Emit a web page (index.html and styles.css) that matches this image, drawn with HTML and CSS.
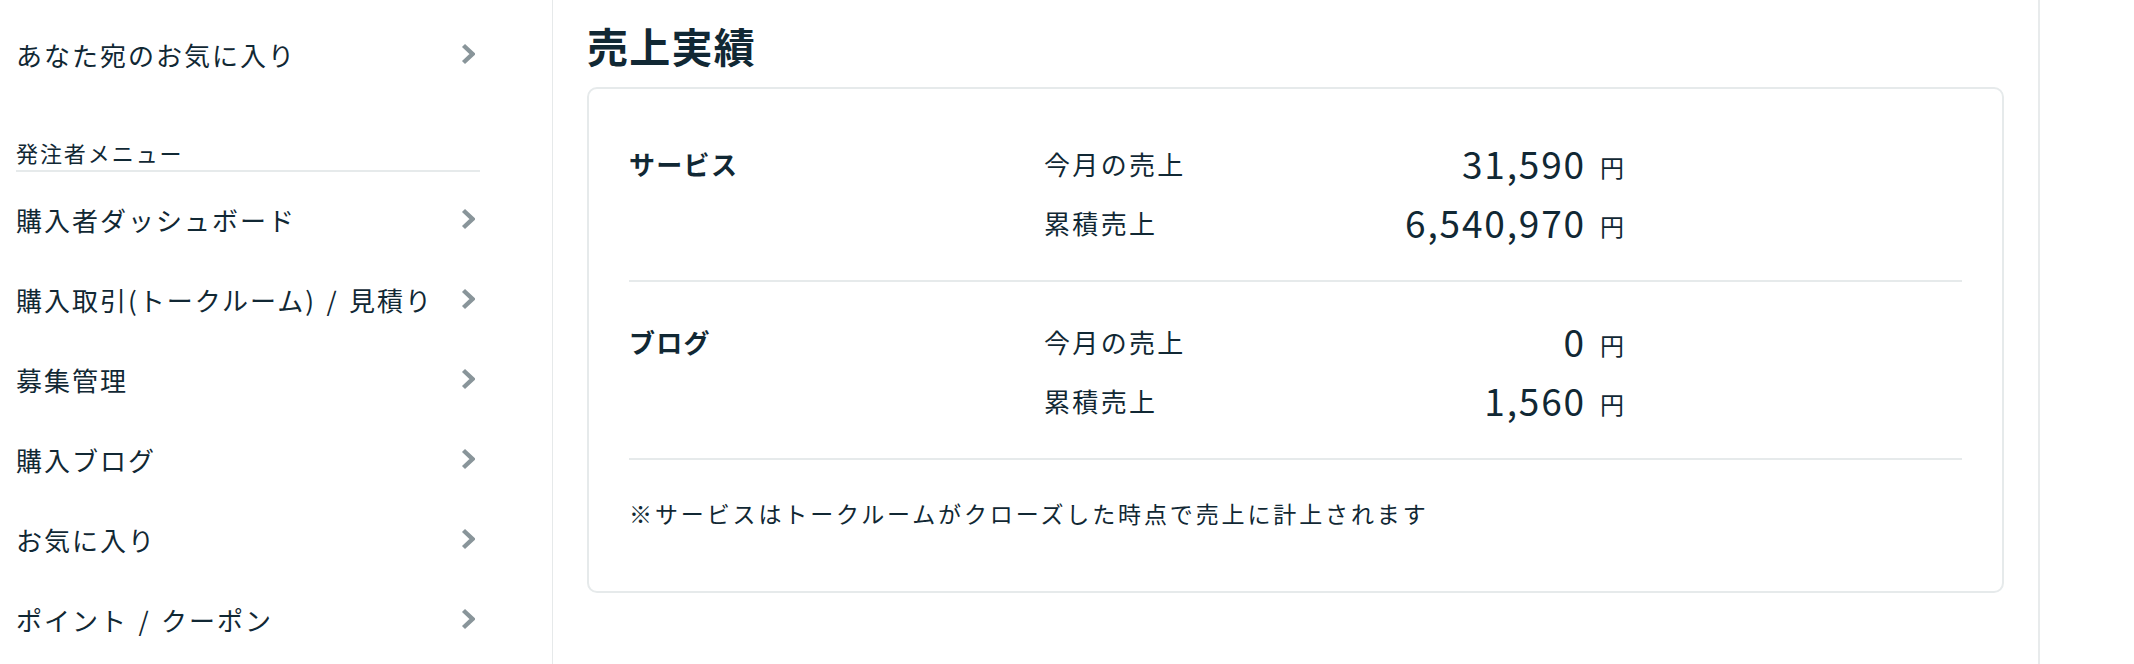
FILE: index.html
```html
<!DOCTYPE html>
<html lang="ja">
<head>
<meta charset="utf-8">
<title>売上実績</title>
<link rel="stylesheet" href="styles.css">
</head>
<body>
<div class="layout">
  <aside class="sidebar">
    <a class="nav-item" href="#"><span>あなた宛のお気に入り</span><svg class="chev" viewBox="0 0 14 22"><polyline points="2.5,2.5 11.5,11 2.5,19.5"/></svg></a>
    <div class="nav-heading">発注者メニュー</div>
    <a class="nav-item" href="#"><span>購入者ダッシュボード</span><svg class="chev" viewBox="0 0 14 22"><polyline points="2.5,2.5 11.5,11 2.5,19.5"/></svg></a>
    <a class="nav-item" href="#"><span>購入取引(トークルーム) / 見積り</span><svg class="chev" viewBox="0 0 14 22"><polyline points="2.5,2.5 11.5,11 2.5,19.5"/></svg></a>
    <a class="nav-item" href="#"><span>募集管理</span><svg class="chev" viewBox="0 0 14 22"><polyline points="2.5,2.5 11.5,11 2.5,19.5"/></svg></a>
    <a class="nav-item" href="#"><span>購入ブログ</span><svg class="chev" viewBox="0 0 14 22"><polyline points="2.5,2.5 11.5,11 2.5,19.5"/></svg></a>
    <a class="nav-item" href="#"><span>お気に入り</span><svg class="chev" viewBox="0 0 14 22"><polyline points="2.5,2.5 11.5,11 2.5,19.5"/></svg></a>
    <a class="nav-item" href="#"><span>ポイント / クーポン</span><svg class="chev" viewBox="0 0 14 22"><polyline points="2.5,2.5 11.5,11 2.5,19.5"/></svg></a>
  </aside>
  <main class="main">
    <h1 class="page-title">売上実績</h1>
    <div class="card">
      <section class="sales-section">
        <div class="sales-name">サービス</div>
        <div class="sales-rows">
          <div class="sales-row"><span class="sales-label">今月の売上</span><span class="sales-value">31,590</span><span class="sales-unit">円</span></div>
          <div class="sales-row"><span class="sales-label">累積売上</span><span class="sales-value">6,540,970</span><span class="sales-unit">円</span></div>
        </div>
      </section>
      <section class="sales-section">
        <div class="sales-name">ブログ</div>
        <div class="sales-rows">
          <div class="sales-row"><span class="sales-label">今月の売上</span><span class="sales-value">0</span><span class="sales-unit">円</span></div>
          <div class="sales-row"><span class="sales-label">累積売上</span><span class="sales-value">1,560</span><span class="sales-unit">円</span></div>
        </div>
      </section>
      <p class="note">※サービスはトークルームがクローズした時点で売上に計上されます</p>
    </div>
  </main>
  <div class="aside-right"></div>
</div>
</body>
</html>
```
FILE: styles.css
```css
* { box-sizing: border-box; }
html, body { margin: 0; padding: 0; background: #fff; }
body {
  font-family: "Noto Sans CJK JP", "Noto Sans", sans-serif;
  color: #112834;
  height: 664px;
  overflow: hidden;
}
.layout {
  display: flex;
  height: 664px;
}
.sidebar {
  width: 553px;
  flex: none;
  padding: 14px 72px 0 16px;
  border-right: 1px solid #e6e9ea;
}
.nav-item {
  display: flex;
  align-items: center;
  justify-content: space-between;
  height: 80px;
  padding-right: 5px;
  font-size: 26px;
  letter-spacing: 0.077em;
  word-spacing: 0.1em;
  color: #112834;
  text-decoration: none;
}
.chev {
  width: 14px;
  height: 22px;
  flex: none;
}
.chev polyline {
  fill: none;
  stroke: #89959a;
  stroke-width: 4.4;
  stroke-linecap: butt;
  stroke-linejoin: miter;
}
.nav-heading {
  margin-top: 43px;
  margin-bottom: 7px;
  padding-bottom: 3px;
  font-size: 22px;
  line-height: 30px;
  letter-spacing: 0.088em;
  border-bottom: 2px solid #e6eaeb;
}
.main {
  width: 1487px;
  flex: none;
  padding: 0 34px;
  border-right: 2px solid #e8ebec;
}
.page-title {
  margin: 15px 0 12px;
  font-size: 41px;
  line-height: 60px;
  font-weight: 700;
  letter-spacing: 0.03em;
}
.card {
  border: 2px solid #e6eaeb;
  border-radius: 10px;
  padding: 15px 40px 0;
}
.sales-section {
  display: grid;
  grid-template-columns: 415px 1fr;
  padding: 30px 0 28px;
  border-bottom: 2px solid #e6eaeb;
}
.sales-name {
  font-size: 26px;
  font-weight: 700;
  line-height: 59px;
  letter-spacing: 0.05em;
}
.sales-row {
  display: flex;
  align-items: center;
  height: 59px;
}
.sales-label {
  width: 220px;
  font-size: 26px;
  line-height: 1;
  letter-spacing: 0.09em;
}
.sales-value {
  width: 322px;
  text-align: right;
  font-size: 37px;
  line-height: 1;
  letter-spacing: 0.05em;
}
.sales-unit {
  margin-left: 14px;
  margin-top: 6px;
  font-size: 24px;
  line-height: 1;
}
.note {
  margin: 0;
  padding: 37px 0 61px;
  font-size: 23px;
  line-height: 33px;
  letter-spacing: 0.125em;
}
.aside-right { flex: 1; }
```
